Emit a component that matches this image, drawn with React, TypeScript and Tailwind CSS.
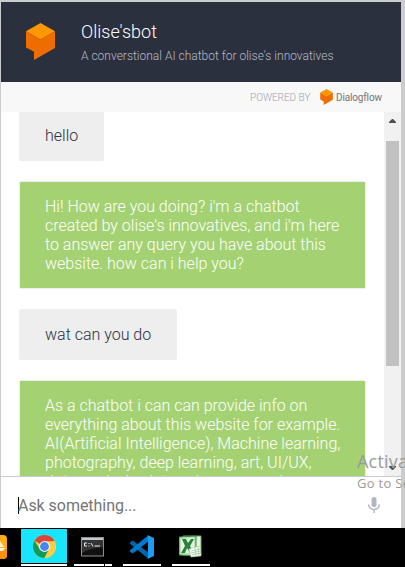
import React from "react";

function DialogflowMark({ className }: { className: string }) {
  return (
    <svg viewBox="0 0 29 37" className={className} aria-hidden="true">
      <path d="M14.5 0 29 8.2 14.5 16.7 0 8.2Z" fill="#ff9800" />
      <path d="M0 8.2 14.5 16.7 29 8.2V25L8 37V28.7L0 24.5Z" fill="#ef6c00" />
    </svg>
  );
}

function UserBubble({ children }: { children: React.ReactNode }) {
  return (
    <div className="w-fit rounded-[2px] bg-[#eeeeee] px-[26px] py-4 text-[#2b313f]">
      {children}
    </div>
  );
}

function BotBubble({ lines }: { lines: string[] }) {
  return (
    <div className="w-[347px] rounded-[2px] border border-[#eeeeee] bg-[#a4d273] py-[15px] pl-[25px] whitespace-nowrap text-white">
      {lines.map((line) => (
        <div key={line}>{line}</div>
      ))}
    </div>
  );
}

function Header() {
  return (
    <header className="flex h-20 shrink-0 bg-[#2b303e] pl-[25px]">
      <DialogflowMark className="mt-[21px] h-[37px] w-[29px]" />
      <div className="ml-[26px] whitespace-nowrap">
        <h1 className="mt-[19px] text-[18px] leading-[22px] font-light text-white">Olise'sbot</h1>
        <p className="mt-[5px] text-[12px] leading-4 font-light text-[#b7bbc8]">
          A converstional AI chatbot for olise's innovatives
        </p>
      </div>
    </header>
  );
}

function Scrollbar() {
  return (
    <div className="flex w-[17px] shrink-0 flex-col items-center bg-[#f1f1f1]">
      <svg className="mt-[7px] h-1 w-[7px]" viewBox="0 0 7 4">
        <path d="M3 0H4L7 3V4H0V3Z" fill="#505050" />
      </svg>
      <div className="mt-[18px] h-[225px] w-[13px] bg-[#c1c1c1]" />
      <svg className="mt-auto mb-[6px] h-1 w-[7px]" viewBox="0 0 7 4">
        <path d="M0 0H7V1L4 4H3L0 1Z" fill="#505050" />
      </svg>
    </div>
  );
}

function ChromeIcon() {
  return (
    <svg viewBox="0 0 24 24" className="h-[23px] w-[23px]">
      <circle cx="12" cy="12" r="12" fill="#ffcd40" />
      <path d="M12 12 1.6 6A12 12 0 0 1 22.4 6Z" fill="#db4437" />
      <path d="M12 12 7.2 14.8 1.6 6A12 12 0 0 0 12 24L16.8 14.8Z" fill="#109b58" />
      <path d="M12 6.5H22.7A12 12 0 0 1 12 24L17 14.7Z" fill="#ffcd40" />
      <circle cx="12" cy="12" r="5.7" fill="#f5f5f5" />
      <circle cx="12" cy="12" r="4.6" fill="#4285f4" />
    </svg>
  );
}

function TerminalIcon() {
  return (
    <svg viewBox="0 0 23 20" className="h-5 w-[23px]">
      <rect x=".5" y=".5" width="22" height="18.5" fill="#111" stroke="#8b8f91" />
      <path d="M1 1H22V3H1Z" fill="#c5c9cb" />
      <path d="M1 3H22V10Q9 11 1 16Z" fill="#343434" />
      <path d="M6 6H3.5V9H6M8 6V7M8 8.5V9.5M10 6 12 9.5M13.5 9H19" fill="none" stroke="#eee" strokeWidth="1" />
    </svg>
  );
}

function CodeIcon() {
  return (
    <svg viewBox="0 0 24 24" className="h-6 w-6">
      <path d="M0 7.6 2.6 5.6 18 17.3V23.5L0 8.7Z" fill="#0065a9" />
      <path d="M0 16.4 2.6 18.4 18 6.7V.5L0 15.3Z" fill="#007acc" />
      <path d="M17.5 0 24 3V21L17.5 24Q18 23.5 18 22V2Q18 .5 17.5 0Z" fill="#1f9cf0" />
    </svg>
  );
}

function SheetIcon() {
  return (
    <svg viewBox="0 0 23 23" className="h-[23px] w-[23px]">
      <path d="M4 1H22V20H4Z" fill="#e5f2df" stroke="#65a269" />
      <path d="M0 2 17 1V21L0 20Z" fill="#b9dfb4" stroke="#398744" />
      <path d="M2 4 15 3V18L2 18Z" fill="#e6f4df" />
      <path d="M3 4H7L9 8 12 4H15L11 11 15 18H11L8 13 6 18H2L6 11Z" fill="#27833b" />
      <path d="M10 14 21 11 22 21 12 22Z" fill="#fafff7" stroke="#a6cda0" strokeWidth=".6" />
      <path d="M12 16 21 14M12 18 21 16M13 20 22 18M16 13 17 21M19 12 20 21" stroke="#8ab886" strokeWidth=".6" />
    </svg>
  );
}

function Taskbar() {
  return (
    <footer className="flex h-[39px] shrink-0 overflow-hidden bg-black">
      <svg className="mt-[7px] h-6 w-[7px]" viewBox="0 0 7 24">
        <path d="M0 0H3Q7 0 7 4V20Q7 24 3 24H0Z" fill="#ffb014" />
        <path d="M0 14H7V20Q7 24 3 24H0Z" fill="#ff9200" />
        <path d="M0 6 4 12H0ZM0 13H5L3 16H0Z" fill="#fff4df" />
      </svg>
      <div className="ml-[14px] flex w-[46px] flex-col">
        <div className="mt-px flex h-[34px] items-center justify-center bg-[#18e5ff]">
          <ChromeIcon />
        </div>
        <div className="mt-px h-[2px] bg-white" />
      </div>
      <div className="ml-[7px] flex w-[38px] flex-col items-center">
        <div className="mt-[9px] h-[27px] pr-px"><TerminalIcon /></div>
        <div className="flex w-full gap-px">
          <div className="h-[2px] w-[30px] bg-white" />
          <div className="h-[2px] w-[7px] bg-white" />
        </div>
      </div>
      <div className="ml-[11px] flex w-[38px] flex-col items-center">
        <div className="mt-[7px] h-[29px]"><CodeIcon /></div>
        <div className="h-[2px] w-full bg-white" />
      </div>
      <div className="ml-[11px] flex w-[38px] flex-col items-center">
        <div className="mt-[7px] h-[29px] pr-px"><SheetIcon /></div>
        <div className="h-[2px] w-full bg-white" />
      </div>
    </footer>
  );
}

export default function App() {
  return (
    <div className="relative flex h-[567px] w-[405px] flex-col overflow-hidden bg-[#cccccc] font-['Roboto',sans-serif]">
      <main className="mt-[2px] mr-1 ml-px flex h-[526px] flex-col bg-white">
        <Header />
        <div className="flex h-[30px] shrink-0 items-center bg-[#f8f8f8] pl-[249px] whitespace-nowrap">
          <span className="w-[70px] text-[10px] font-light text-[#9da2b0]">POWERED BY</span>
          <DialogflowMark className="h-4 w-[13px]" />
          <span className="ml-[3px] text-[10px] tracking-[-0.15px] text-[#757575]">Dialogflow</span>
        </div>
        <section className="flex h-[364px] shrink-0 overflow-hidden">
          <div className="flex min-w-0 flex-1 flex-col gap-5 overflow-hidden pl-[18px] text-[16px] leading-[19px] font-light">
            <div className="-mt-[2px]"><UserBubble>hello</UserBubble></div>
            <BotBubble
              lines={[
                "Hi! How are you doing? i'm a chatbot",
                "created by olise's innovatives, and i'm here",
                "to answer any query you have about this",
                "website. how can i help you?",
              ]}
            />
            <UserBubble>wat can you do</UserBubble>
            <BotBubble
              lines={[
                "As a chatbot i can can provide info on",
                "everything about this website for example.",
                "AI(Artificial Intelligence), Machine learning,",
                "photography, deep learning, art, UI/UX,",
                "data analysis, data science, neural",
              ]}
            />
          </div>
          <Scrollbar />
        </section>
        <div className="flex flex-1 border-t border-[#cccccc] bg-white pr-[21px] pl-[17px]">
          <div className="mt-5 h-[17px] w-px bg-black" />
          <span className="mt-[19px] -ml-px text-[16px] leading-[19px] tracking-[-0.04px] text-[#757575]">Ask something...</span>
          <svg className="mt-5 ml-auto h-4 w-3" viewBox="0 0 12 16">
            <rect x="3.5" width="5" height="10" rx="2.5" fill="#b1b7c5" />
            <path d="M.7 7.5C.7 14 11.3 14 11.3 7.5M6 12V16" fill="none" stroke="#b1b7c5" strokeWidth="1.5" />
          </svg>
        </div>
      </main>
      <Taskbar />
      <div className="absolute top-[449px] left-[357px] font-['Open_Sans',sans-serif] whitespace-nowrap text-[#9b9b9b]">
        <div className="text-[18px] leading-6 tracking-[0.2px]">Activate Windows</div>
        <div className="text-[13px] leading-[21px] tracking-[0.3px]">Go to Settings to activate Windows.</div>
      </div>
    </div>
  );
}
